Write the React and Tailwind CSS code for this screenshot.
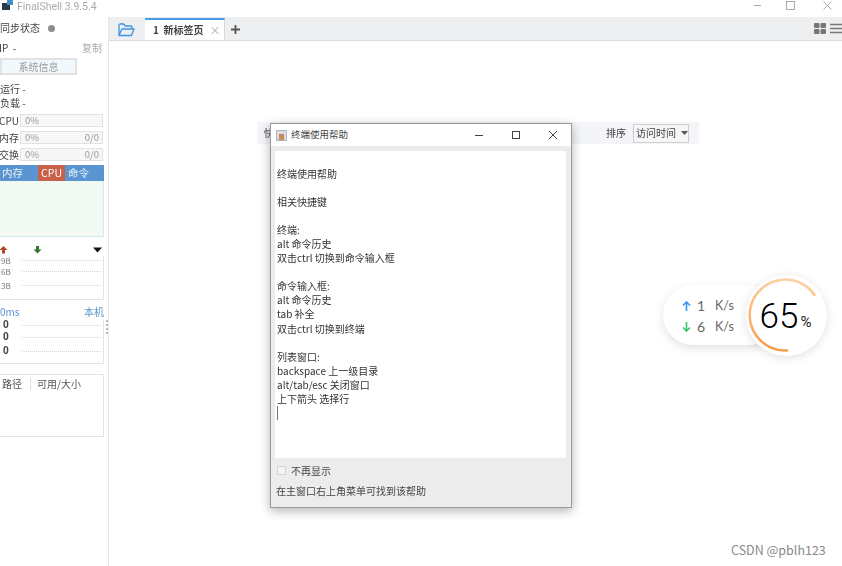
import React from 'react';

const FONT = "font-['Noto_Sans_CJK_SC','Noto_Sans',sans-serif]";

const helpLines = [
  '终端使用帮助', '', '相关快捷键', '', '终端:', 'alt 命令历史', '双击ctrl 切换到命令输入框', '',
  '命令输入框:', 'alt 命令历史', 'tab 补全', '双击ctrl 切换到终端', '',
  '列表窗口:', 'backspace 上一级目录', 'alt/tab/esc 关闭窗口', '上下箭头 选择行',
];

const Meter = ({ label, value, total }) => (
  <div className="flex items-center h-[13px] mb-1">
    <span className="w-[21px] text-[10px] text-[#444] -ml-px shrink-0 leading-none">{label}</span>
    <div className="w-[83px] h-[13px] bg-[#f7f7f7] border border-[#e2e2e2] flex items-center justify-between pl-[4px] pr-[3px] text-[9.5px] text-[#999] leading-none">
      <span>{value}</span>
      <span>{total}</span>
    </div>
  </div>
);

const GraphLine = ({ label, className }) => (
  <div className={`flex items-center ${className || ''}`}>
    <span className="w-[22px] pl-[1px] text-[8px] text-[#777] leading-none">{label}</span>
    <div className="flex-1 mr-[2px] border-t border-dotted border-[#d5d5d5]" />
  </div>
);

const PingLine = ({ className }) => (
  <div className={`flex items-center h-[12px] ${className || ''}`}>
    <span className="w-[22px] pl-[3px] text-[10px] font-bold text-[#444] leading-none font-['Roboto',sans-serif]">0</span>
    <div className="flex-1 mr-[2px] border-t border-dotted border-[#d5d5d5]" />
  </div>
);

const Sidebar = () => (
  <aside className="relative w-[109px] shrink-0 border-r border-[#e6e6e6] overflow-hidden blur-[0.35px]">
    <div className="w-[104px]">
      <div className="flex items-center h-[14px] mt-[4px]">
        <span className="text-[10px] text-[#444] leading-none">同步状态</span>
        <span className="ml-[8px] w-[7px] h-[7px] rounded-full bg-[#8c8c8c]" />
      </div>
      <div className="flex items-center justify-between h-[14px] mt-[6px] pr-[2px] text-[10px] leading-none">
        <span className="text-[#444] -ml-[1px]">IP&nbsp; -</span>
        <span className="text-[#aaa]">复制</span>
      </div>
      <div className="w-[77px] h-[17px] mt-[3px] bg-[#f2f9fd] border-2 border-[#e2e2e2] flex items-center justify-center text-[10px] text-[#999] leading-none">
        系统信息
      </div>
      <div className="h-[14px] mt-[7px] flex items-center text-[10px] text-[#444] leading-none">运行 -</div>
      <div className="h-[14px] mb-[4px] flex items-center text-[10px] text-[#444] leading-none">负载 -</div>
      <Meter label="CPU" value="0%" />
      <Meter label="内存" value="0%" total="0/0" />
      <Meter label="交换" value="0%" total="0/0" />
      <div className="flex h-[16px] mt-[2px] bg-[#5b95d1] text-[10.5px] text-[#e8f0f8] leading-none items-stretch">
        <span className="w-[38px] flex items-center pl-[2px]">内存</span>
        <span className="w-[27px] flex items-center justify-center bg-[#c9604a] text-white">CPU</span>
        <span className="flex items-center pl-[3px]">命令</span>
      </div>
      <div className="h-[56px] bg-[#f2f9f3] border-r border-b border-[#d8e8f0]" />
      <div className="flex items-center justify-between h-[13px] mt-[6px] relative">
        <svg className="w-[9px] h-[9px] -ml-[1px]" viewBox="0 0 9 9"><path d="M4.5 1 8.5 5H6v3.5H3V5H.5z" fill="#b5452a" /></svg>
        <svg className="w-[9px] h-[9px] absolute left-[33px]" viewBox="0 0 9 9"><path d="M4.5 8.5 .5 4.5H3V1h3v3.500h2.500z" fill="#2f7a30" /></svg>
        <svg className="w-[9px] h-[6px] mr-[2px]" viewBox="0 0 9 6"><path d="M0 .5h9L4.500 5.500z" fill="#111" /></svg>
      </div>
      <div className="h-[44px] border-r border-b border-[#dbe6ee]">
        <GraphLine label="9B" className="h-[9px]" />
        <GraphLine label="6B" className="h-[11px] mt-[1px]" />
        <GraphLine label="3B" className="h-[11px] mt-[3px]" />
      </div>
      <div className="flex items-center justify-between h-[14px] mt-[5px] text-[10px] text-[#5b95d1] leading-none">
        <span>0ms</span>
        <span>本机</span>
      </div>
      <div className="h-[45px] border-r border-b border-[#dbe6ee]">
        <PingLine />
        <PingLine />
        <PingLine className="mt-[2px]" />
      </div>
      <div className="h-[63px] mt-[10px] border border-l-0 border-[#dfe6ea] flex items-start pt-[3px] text-[10px] text-[#555] leading-none">
        <span className="w-[31px] h-[12px] border-r border-[#ddd] pl-[2px] flex items-center">路径</span>
        <span className="pl-[6px] h-[12px] flex items-center">可用/大小</span>
      </div>
    </div>
    {/* drag handle on the divider */}
    <div className="absolute left-[106px] top-[303px] flex flex-col gap-[2px]">
      <span className="w-[2px] h-[2px] bg-[#bbb]" />
      <span className="w-[2px] h-[2px] bg-[#bbb]" />
      <span className="w-[2px] h-[2px] bg-[#bbb]" />
      <span className="w-[2px] h-[2px] bg-[#bbb]" />
    </div>
  </aside>
);

const TabBar = () => (
  <div className="h-[24px] bg-[#eeeff1] border-b border-[#dcdcdc] flex items-end blur-[0.3px]">
    <svg className="w-[17px] h-[14px] ml-[9px] mb-[3px]" viewBox="0 0 17 14" fill="none" stroke="#3d94e3" strokeWidth="1.300" strokeLinejoin="round">
      <path d="M1 12V2.500C1 1.700 1.500 1 2.300 1h3.400l1.500 2h5.800c.7 0 1.100.5 1.100 1.200V6" />
      <path d="M1 12.500 3.800 6h12.200l-2.600 6.500z" />
    </svg>
    <div className="ml-[10px] w-[80px] h-[22px] bg-white border-t-2 border-[#4a9be8] border-r border-r-[#d8d8d8] flex items-center pl-[8px] text-[10px] font-bold text-[#444] leading-none">
      <span>1&nbsp; 新标签页</span>
      <span className="ml-[6px] text-[11px] font-normal text-[#aaa]">×</span>
    </div>
    <svg className="w-[9px] h-[9px] ml-[6px] mb-[6px]" viewBox="0 0 9 9"><path d="M4.500 0v9M0 4.500h9" stroke="#555" strokeWidth="1.800" /></svg>
    <div className="ml-auto flex items-center gap-[4px] mb-[6px]">
      <svg className="w-[12px] h-[11px]" viewBox="0 0 12 11" fill="#777">
        <rect x="0" y="0" width="5.500" height="5" rx="1" /><rect x="6.500" y="0" width="5.500" height="5" rx="1" />
        <rect x="0" y="6" width="5.500" height="5" rx="1" /><rect x="6.500" y="6" width="5.500" height="5" rx="1" />
      </svg>
      <svg className="w-[12px] h-[11px]" viewBox="0 0 12 11" stroke="#777" strokeWidth="1.300"><path d="M0 1.500h12M0 5.500h12M0 9.500h12" /></svg>
    </div>
  </div>
);

const HelpDialog = () => (
  <div className="absolute left-[270px] top-[123px] w-[302px] h-[385px] bg-[#ececec] border border-[#9a9a9a] shadow-[0_3px_10px_rgba(0,0,0,0.3)] flex flex-col blur-[0.3px]">
    <div className="h-[22px] bg-white flex items-center shrink-0">
      <div className="ml-[5px] w-[11px] h-[11px] bg-[#d9dde3] border border-[#b3b8c0] flex items-end justify-center">
        <div className="w-[5px] h-[6px] bg-[#c98a5a]" />
      </div>
      <span className="ml-[4px] text-[9.5px] text-[#444] leading-none">终端使用帮助</span>
      <svg className="ml-auto w-[10px] h-[10px]" viewBox="0 0 10 10" stroke="#444"><path d="M1 5.500h8" /></svg>
      <svg className="ml-[27px] w-[10px] h-[10px]" viewBox="0 0 10 10" fill="none" stroke="#444"><rect x="1.500" y="1.500" width="7" height="7" /></svg>
      <svg className="ml-[27px] mr-[13px] w-[10px] h-[10px]" viewBox="0 0 10 10" stroke="#444"><path d="M1 1l8 8M9 1l-8 8" /></svg>
    </div>
    <div className="ml-[4px] mr-[5px] mt-[5px] h-[307px] bg-white pl-[2px] pt-[16px] text-[10px] text-[#333] leading-[14px] shrink-0">
      {helpLines.map((line, i) => (
        <div key={i} className="h-[14.060px] whitespace-pre">{line}</div>
      ))}
      <div className="w-px h-[14px] bg-[#777]" />
    </div>
    <div className="flex items-center mt-[7px] ml-[6px] h-[11px]">
      <div className="w-[9px] h-[9px] bg-[#f4f4f4] border border-[#d5d5d5]" />
      <span className="ml-[5px] text-[10px] text-[#444] leading-none">不再显示</span>
    </div>
    <div className="mt-[8px] ml-[5px] text-[10px] text-[#444] leading-[14px]">在主窗口右上角菜单可找到该帮助</div>
  </div>
);

const SpeedWidget = () => (
  <div className="absolute left-[663px] top-[275px] w-[165px] h-[81px]">
    <div className="absolute left-0 top-[10px] w-[115px] h-[60px] rounded-full bg-white shadow-[0_3px_10px_rgba(0,0,0,0.12)] pl-[19px] pt-[10px] text-[#666] leading-[21px] font-['Lato',sans-serif]">
      <div className="flex items-center">
        <svg className="w-[9px] h-[10px]" viewBox="0 0 9 10" fill="none" stroke="#3b94f5" strokeWidth="1.600"><path d="M4.500 10V1M1 4.500l3.500-3.500 3.500 3.500" /></svg>
        <span className="ml-[6px] w-[18px] text-[14px]">1</span><span className="text-[12.5px]">K/s</span>
      </div>
      <div className="flex items-center">
        <svg className="w-[9px] h-[10px]" viewBox="0 0 9 10" fill="none" stroke="#35c46c" strokeWidth="1.600"><path d="M4.500 0v9M1 5.500l3.500 3.500 3.500-3.500" /></svg>
        <span className="ml-[6px] w-[18px] text-[14px]">6</span><span className="text-[12.5px]">K/s</span>
      </div>
    </div>
    <div className="absolute left-[83px] top-0 w-[81px] h-[81px] rounded-full bg-white shadow-[0_2px_10px_rgba(0,0,0,0.12)] flex items-center justify-center pr-[2px] text-black font-['Roboto',sans-serif]">
      <svg className="absolute inset-0" width="81" height="81" viewBox="0 0 81 81" fill="none" strokeWidth="2.500" strokeLinecap="round">
        <defs>
          <linearGradient id="ring" x1="0" y1="0" x2="0" y2="1">
            <stop offset="0" stopColor="#fdd0a0" />
            <stop offset="1" stopColor="#f89a45" />
          </linearGradient>
        </defs>
        <path d="M68.500 20 A35.500 35.500 0 1 0 41 75.500" stroke="url(#ring)" />
      </svg>
      <span className="text-[35px] font-light leading-none mt-[2px]">65</span>
      <span className="text-[15px] leading-none mt-[13px] ml-[2px] text-[#222]">%</span>
    </div>
  </div>
);

export default function App() {
  return (
    <div className={`relative w-[842px] h-[566px] bg-white overflow-hidden flex flex-col ${FONT}`}>
      <div className="h-[17px] shrink-0 flex items-start blur-[0.35px]">
        <svg className="ml-[2px] w-[11px] h-[11px]" viewBox="0 0 11 11">
          <rect x="0" y="3" width="8" height="7" fill="#2b3a4a" />
          <rect x="5" y="0" width="6" height="5" fill="#4a90c8" />
        </svg>
        <span className="ml-[4px] text-[10.5px] text-[#aaa] font-['Roboto',sans-serif] leading-[13px]">FinalShell 3.9.5.4</span>
        <div className="ml-auto flex items-center mt-[1px]">
          <svg className="w-[9px] h-[9px]" viewBox="0 0 9 9" stroke="#aaa"><path d="M1 4.500h7" /></svg>
          <svg className="ml-[24px] w-[9px] h-[9px]" viewBox="0 0 9 9" fill="none" stroke="#aaa"><rect x=".5" y=".5" width="8" height="8" /></svg>
          <svg className="ml-[28px] mr-[10px] w-[9px] h-[9px]" viewBox="0 0 9 9" stroke="#aaa"><path d="M.5.500l8 8M8.500.500l-8 8" /></svg>
        </div>
      </div>
      <div className="flex flex-1 min-h-0">
        <Sidebar />
        <main className="flex-1 min-w-0 flex flex-col">
          <TabBar />
          <div className="mt-[81px] ml-[148px] w-[442px] h-[22px] bg-[#f4f5f9] flex items-center text-[10px] text-[#444] leading-none blur-[0.3px]">
            <span className="ml-[7px]">快</span>
            <span className="ml-auto">排序</span>
            <div className="ml-[7px] mr-[10px] w-[56px] h-[19px] bg-[#f6f6f6] border border-[#cfcfcf] flex items-center pl-[2px]">
              访问时间
              <svg className="ml-[5px] w-[7px] h-[4px]" viewBox="0 0 7 4"><path d="M0 0h7L3.500 4z" fill="#555" /></svg>
            </div>
          </div>
        </main>
      </div>
      <HelpDialog />
      <SpeedWidget />
      <span className="absolute left-[731px] top-[542px] text-[12.5px] text-[#8a8a8a] leading-[16px]">CSDN @pblh123</span>
    </div>
  );
}
